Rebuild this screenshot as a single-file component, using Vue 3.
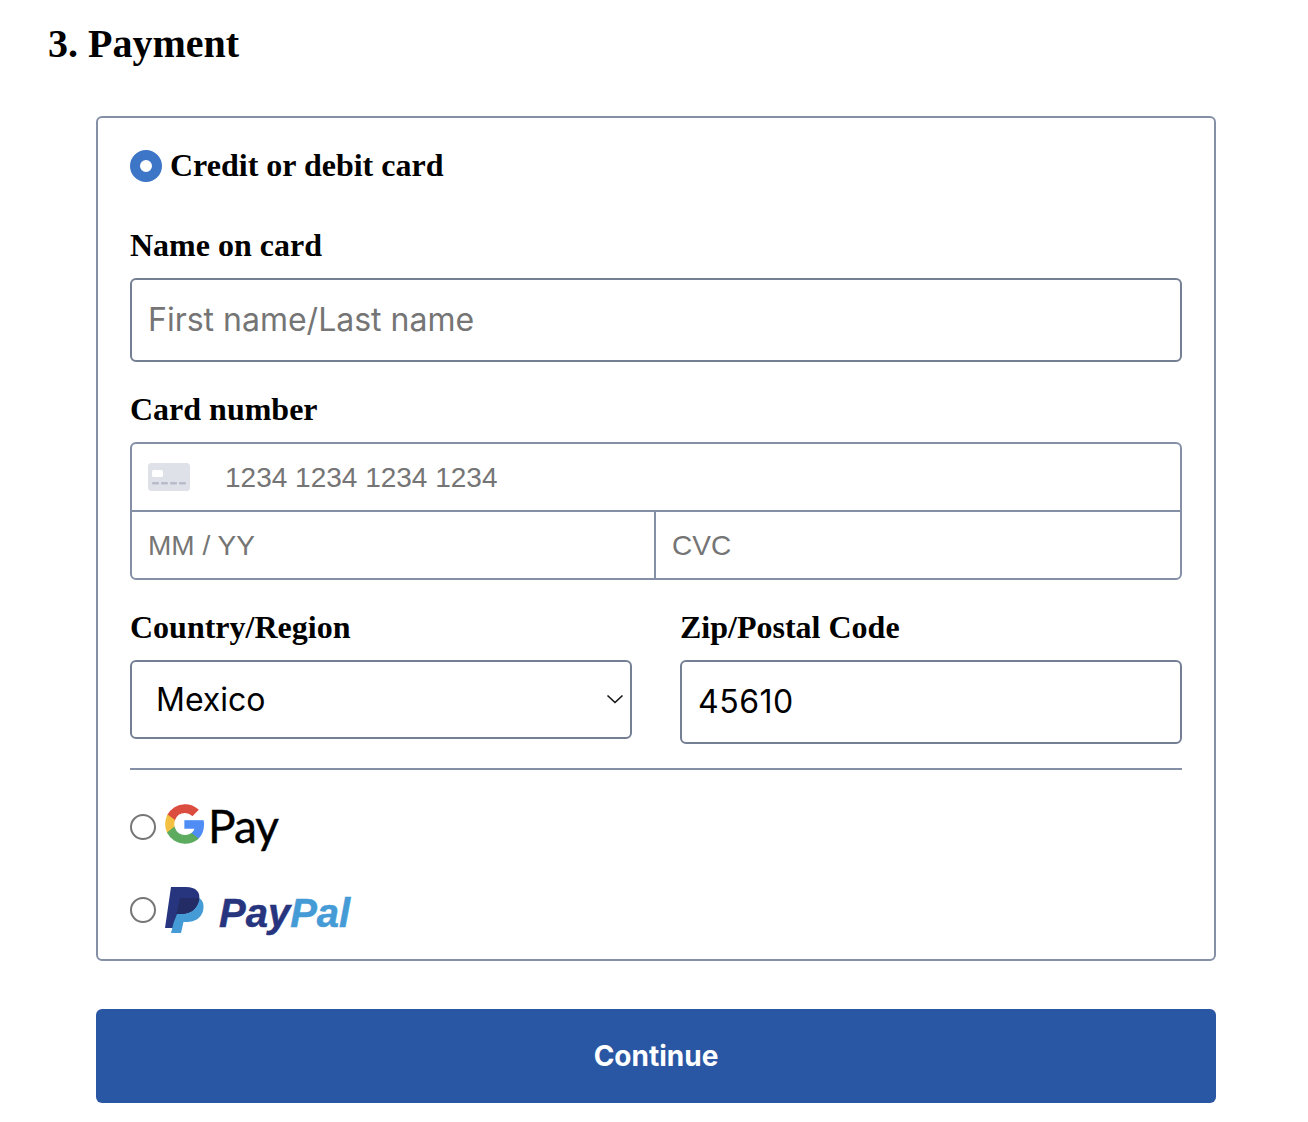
<script setup>
const country = 'Mexico'
</script>

<template>
  <main class="page">
    <h1 class="title">3. Payment</h1>
    <form class="box" @submit.prevent>
      <label class="method-row">
        <input class="radio-on" type="radio" name="pay" checked />
        <span class="method-text">Credit or debit card</span>
      </label>

      <label class="label first" for="name">Name on card</label>
      <input id="name" class="field" placeholder="First name/Last name" />

      <label class="label second" for="num">Card number</label>
      <div class="card-group">
        <div class="card-top">
          <svg class="card-icon" width="42" height="28" viewBox="0 0 42 28" aria-hidden="true">
            <rect width="42" height="28" rx="3.5" fill="#dfe1e8" />
            <rect x="4" y="7" width="11" height="7" rx="1.5" fill="#fff" />
            <g fill="#b9bccb">
              <rect x="4" y="19" width="7" height="2.5" rx="1" />
              <rect x="13" y="19" width="7" height="2.5" rx="1" />
              <rect x="22" y="19" width="7" height="2.5" rx="1" />
              <rect x="31" y="19" width="7" height="2.5" rx="1" />
            </g>
          </svg>
          <input id="num" class="card-input" placeholder="1234 1234 1234 1234" />
        </div>
        <div class="card-bottom">
          <input class="card-input cell" placeholder="MM / YY" />
          <input class="card-input cell right" placeholder="CVC" />
        </div>
      </div>

      <div class="two-col">
        <div class="col">
          <label class="label" for="country">Country/Region</label>
          <div class="select-wrap">
            <select id="country" class="select"><option>{{ country }}</option></select>
            <svg class="chevron" width="18" height="10" viewBox="0 0 18 10" aria-hidden="true">
              <path d="M1.5 1.5 9 8.5l7.5-7" fill="none" stroke="#111" stroke-width="1.6" />
            </svg>
          </div>
        </div>
        <div class="col">
          <label class="label" for="zip">Zip/Postal Code</label>
          <input id="zip" class="field zip" value="45610" />
        </div>
      </div>

      <hr class="rule" />

      <label class="wallet gpay">
        <input class="radio-off" type="radio" name="pay" />
        <svg class="g-mark" width="40" height="40" viewBox="-1 -1 50 50" aria-hidden="true">
          <path fill="#DB4D3F" stroke="#DB4D3F" stroke-width="1.6" d="M24 9.500c3.540 0 6.710 1.220 9.210 3.600l6.850-6.850C35.900 2.380 30.470 0 24 0 14.620 0 6.510 5.380 2.560 13.220l7.980 6.190C12.430 13.720 17.740 9.500 24 9.500z" />
          <path fill="#4F8DF5" stroke="#4F8DF5" stroke-width="1.600" d="M46.980 24.550c0-1.570-.15-3.090-.38-4.550H24v9.020h12.940c-.58 2.960-2.260 5.480-4.780 7.180l7.730 6c4.510-4.180 7.090-10.360 7.090-17.650z" />
          <path fill="#F4C042" stroke="#F4C042" stroke-width="1.600" d="M10.530 28.590c-.48-1.450-.76-2.990-.76-4.590s.27-3.140.76-4.590l-7.980-6.190C.92 16.460 0 20.120 0 24c0 3.880.92 7.540 2.560 10.780l7.970-6.190z" />
          <path fill="#5CAB5F" stroke="#5CAB5F" stroke-width="1.600" d="M24 48c6.480 0 11.930-2.130 15.890-5.810l-7.730-6c-2.150 1.450-4.920 2.300-8.160 2.300-6.260 0-11.570-4.220-13.470-9.910l-7.980 6.190C6.510 42.620 14.620 48 24 48z" />
        </svg>
        <span class="pay-word">Pay</span>
      </label>

      <label class="wallet paypal">
        <input class="radio-off" type="radio" name="pay" />
        <svg class="pp-mark" width="40" height="46" viewBox="0 0 40 46" aria-hidden="true">
          <path fill="#27357F" d="M6 0H21C31 0 36 5 34 14 32 23 26 27 17 27H13L10 41H0Z" />
          <path fill="#459BD6" d="M34 11C38 13 39.500 18 38 24 36 31 30 35 22 35H18.500L16 46H6L8.500 36 12 27H17C26 27 33 22 34 11Z" />
          <path fill="#232C65" d="M15 11H29C31.500 11 33 11 34.500 11.800 33 21 26 27 17 27H11.500Z" />
        </svg>
        <span class="pp-word"><span class="pp-a">Pay</span><span class="pp-b">Pal</span></span>
      </label>
    </form>

    <button class="continue" type="button">Continue</button>
  </main>
</template>

<style scoped>
.page {
  width: 1308px;
  height: 1122px;
  box-sizing: border-box;
  padding: 21px 92px 0 96px;
  font-family: "Liberation Serif", serif;
  color: #000;
  background: #fff;
}
.title {
  margin: 0 0 49px -48px;
  font-size: 40px;
  line-height: 46px;
  font-weight: 700;
}
.box {
  box-sizing: border-box;
  height: 845px;
  padding: 32px;
  border: 2px solid #8590a6;
  border-radius: 6px;
  display: flex;
  flex-direction: column;
}
.box > * {
  flex: none;
}
.method-row {
  display: flex;
  align-items: center;
  gap: 8px;
  height: 32px;
  font-size: 32px;
  font-weight: 700;
}
.method-text {
  margin-bottom: 2px;
}
.radio-on {
  appearance: none;
  box-sizing: border-box;
  width: 32px;
  height: 32px;
  margin: 0;
  border-radius: 50%;
  border: 10px solid #3d76c6;
  background: #fff;
}
.radio-off {
  appearance: none;
  box-sizing: border-box;
  flex: none;
  width: 26px;
  height: 26px;
  margin: 0;
  border-radius: 50%;
  border: 2px solid #767676;
  background: #fff;
}
.gpay .radio-off {
  margin-top: 6px;
}
.label {
  display: block;
  font-size: 32px;
  font-weight: 700;
  line-height: 36px;
  margin-bottom: 15px;
}
.label.first {
  margin-top: 45px;
}
.label.second {
  margin-top: 29px;
}
.field {
  display: block;
  box-sizing: border-box;
  width: 100%;
  height: 84px;
  padding: 0 16px 2px;
  border: 2px solid #747f94;
  border-radius: 6px;
  background: #fff;
  font-family: Inter, sans-serif;
  font-size: 32px;
  color: #000;
  outline: none;
}
.zip {
  letter-spacing: 0.5px;
}
.field::placeholder,
.card-input::placeholder {
  color: #757575;
  opacity: 1;
}
.card-group {
  box-sizing: border-box;
  height: 138px;
  border: 2px solid #8590a6;
  border-radius: 6px;
  display: flex;
  flex-direction: column;
}
.card-top {
  flex: none;
  box-sizing: border-box;
  height: 68px;
  padding-left: 16px;
  display: flex;
  align-items: center;
  border-bottom: 2px solid #8590a6;
}
.card-icon {
  flex: none;
  margin-right: 35px;
}
.card-input {
  box-sizing: border-box;
  border: 0;
  padding: 2px 0 0;
  flex: 1;
  min-width: 0;
  background: transparent;
  font-family: "Liberation Sans", sans-serif;
  font-size: 28px;
  outline: none;
}
.card-bottom {
  flex: 1;
  display: flex;
}
.cell {
  flex: none;
  width: 522px;
  padding-left: 16px;
}
.cell.right {
  flex: 1;
  width: auto;
  border-left: 2px solid #8590a6;
}
.two-col {
  display: grid;
  grid-template-columns: 502px 502px;
  column-gap: 48px;
  margin-top: 29px;
}
.select-wrap {
  position: relative;
  height: 79px;
}
.select {
  appearance: none;
  box-sizing: border-box;
  width: 100%;
  height: 100%;
  padding: 0 24px;
  border: 2px solid #747f94;
  border-radius: 6px;
  background: #fff;
  font-family: Inter, sans-serif;
  font-size: 32px;
  color: #000;
  outline: none;
}
.chevron {
  position: absolute;
  right: 8px;
  top: 34px;
  pointer-events: none;
}
.rule {
  margin: 24px 0 0;
  border: 0;
  height: 2px;
  background: #8590a6;
}
.wallet {
  display: flex;
  align-items: center;
}
.gpay {
  height: 40px;
  margin-top: 34px;
}
.paypal {
  height: 46px;
  margin-top: 43px;
}
.g-mark {
  flex: none;
  margin-left: 9px;
}
.pay-word {
  margin-left: 3px;
  font-family: Lato, sans-serif;
  font-size: 46px;
  line-height: 46px;
  letter-spacing: -1px;
  color: #000;
  position: relative;
  top: 2px;
  -webkit-text-stroke: 0.4px currentColor;
}
.pp-mark {
  flex: none;
  margin-left: 9px;
}
.pp-word {
  margin-left: 14px;
  font-family: "Liberation Sans", sans-serif;
  font-style: italic;
  font-weight: 700;
  font-size: 40px;
  line-height: 46px;
  position: relative;
  top: 3px;
  -webkit-text-stroke: 0.5px currentColor;
}
.pp-a {
  color: #27357f;
}
.pp-b {
  color: #459bd6;
}
.continue {
  display: block;
  width: 100%;
  height: 94px;
  margin-top: 48px;
  border: 0;
  border-radius: 6px;
  background: #2a57a4;
  color: #fff;
  font-family: Inter, sans-serif;
  font-size: 28px;
  font-weight: 700;
}
</style>
